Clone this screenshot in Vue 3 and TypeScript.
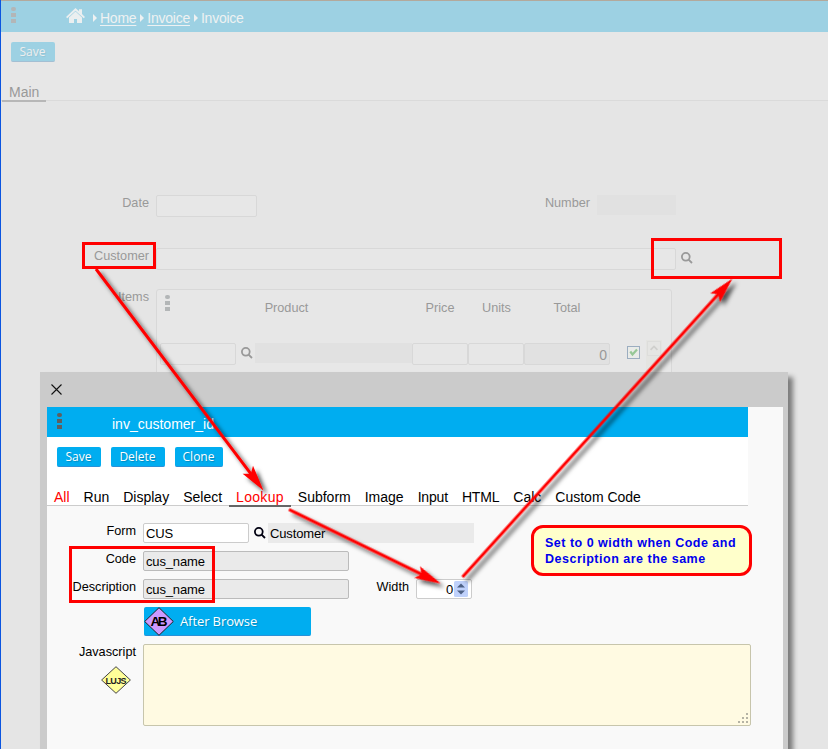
<script setup lang="ts">
interface Tab { label: string; red?: boolean; active?: boolean }
interface Arrow { x: number; y: number; length: number; angle: number }

const tabs: Tab[] = [
  { label: 'All', red: true },
  { label: 'Run' },
  { label: 'Display' },
  { label: 'Select' },
  { label: 'Lookup', red: true, active: true },
  { label: 'Subform' },
  { label: 'Image' },
  { label: 'Input' },
  { label: 'HTML' },
  { label: 'Calc' },
  { label: 'Custom Code' },
]
const actions: string[] = ['Save', 'Delete', 'Clone']

function arrow(x1: number, y1: number, x2: number, y2: number): Arrow {
  return {
    x: x2,
    y: y2,
    length: Math.hypot(x2 - x1, y2 - y1),
    angle: (Math.atan2(y2 - y1, x2 - x1) * 180) / Math.PI,
  }
}
const arrows: Arrow[] = [
  arrow(96, 269, 263.5, 490.5),
  arrow(289, 509.5, 440.5, 583.5),
  arrow(462.5, 577, 732.5, 278.5),
]
</script>

<template>
  <div class="screen">
    <header class="crumbs">
      <span class="dots"><i></i><i></i><i></i></span>
      <svg class="home" width="19" height="16" viewBox="0 0 19 16">
        <path d="M9.500 0 13 3.200V1.200h3v4.800l3 2.900-1.300 1.400L9.500 2.800 1.300 10.300 0 8.900z" fill="#ebeff0" />
        <path d="M9.500 3.600 16 9.600V15h-5v-4H8v4H3V9.600z" fill="#ebeff0" />
      </svg>
      <nav>
        <b class="tri"></b><a>Home</a><b class="tri"></b><a>Invoice</a><b class="tri"></b><span>Invoice</span>
      </nav>
    </header>
    <div class="toolbar"><button class="btn faded">Save</button></div>
    <div class="maintabs"><span>Main</span></div>

    <main class="invoice">
      <div class="row date">
        <label>Date</label><div class="box w101"></div>
        <label class="number">Number</label><div class="fill w79"></div>
      </div>
      <div class="row customer">
        <label>Customer</label><div class="box w520"></div>
        <svg class="mag" width="12" height="12" viewBox="0 0 12 12"><circle cx="4.800" cy="4.800" r="3.900" /><path d="M7.600 7.600 11 11" /></svg>
      </div>
      <div class="row items">
        <label>Items</label>
        <section class="sub">
          <div class="heads">
            <span class="dots"><i></i><i></i><i></i></span>
            <span>Product</span><span>Price</span><span>Units</span><span>Total</span>
          </div>
          <div class="cells">
            <div class="box"></div>
            <svg class="mag" width="12" height="12" viewBox="0 0 12 12"><circle cx="4.800" cy="4.800" r="3.900" /><path d="M7.600 7.600 11 11" /></svg>
            <div class="fill"></div><div class="box"></div><div class="box"></div><div class="box total">0</div>
            <svg class="check" width="13" height="13" viewBox="0 0 13 13"><rect x=".5" y=".5" width="12" height="12" fill="#e9ebe8" stroke="#9badc0" /><path d="M3.300 5.500 5.500 8.500 10 3.500" fill="none" stroke="#96c796" stroke-width="2.200" /></svg>
            <div class="scroll"><svg width="14" height="15" viewBox="0 0 14 15"><path d="M3 9 7 5 11 9" fill="none" stroke="#cfcfcc" stroke-width="2" /></svg></div>
          </div>
        </section>
      </div>
    </main>

    <section class="dialog">
      <div class="close"><svg width="11" height="11" viewBox="0 0 11 11"><path d="M.5.5 10.500 10.500M10.500.5.5 10.500" stroke="#111" stroke-width="1.100" /></svg></div>
      <div class="content">
        <div class="title"><span class="dots"><i></i><i></i><i></i></span><span class="name">inv_customer_id</span></div>
        <div class="upper">
          <div class="actions"><button v-for="a in actions" :key="a" class="btn">{{ a }}</button></div>
          <div class="tabs"><span v-for="t in tabs" :key="t.label" :class="{ red: t.red, active: t.active }">{{ t.label }}</span></div>
        </div>
        <div class="form">
          <div class="line">
            <label>Form</label><div class="field white w106">CUS</div>
            <svg class="mag dark" width="12" height="12" viewBox="0 0 12 12"><circle cx="4.800" cy="4.800" r="3.900" /><path d="M7.600 7.600 11 11" /></svg>
            <div class="readonly">Customer</div>
          </div>
          <div class="line"><label>Code</label><div class="field w206">cus_name</div></div>
          <div class="line">
            <label>Description</label><div class="field w206">cus_name</div>
            <label class="width">Width</label>
            <div class="field white spin"><span>0</span>
              <svg width="14" height="16" viewBox="0 0 14 16"><rect width="14" height="16" rx="1.500" fill="#bfd1fb" /><path d="M3 6.500 7 2.500 11 6.500zM3 9.500 7 13.500 11 9.500z" fill="#4d6185" /></svg>
            </div>
          </div>
          <div class="browse">
            <svg width="30" height="29" viewBox="0 0 30 29"><path d="M15 .7 29.300 14.500 15 28.300 .7 14.500z" fill="#cc99ff" stroke="#222" /><text x="15" y="19" text-anchor="middle" textLength="17" class="ab">AB</text></svg>
            <span>After Browse</span>
          </div>
          <div class="script">
            <div class="side"><label>Javascript</label>
              <svg width="30" height="28" viewBox="0 0 30 28"><path d="M15 .7 29.400 14 15 27.300 .6 14z" fill="#ffff99" stroke="#444" /><text x="15" y="17.500" text-anchor="middle" textLength="21" class="lujs">LUJS</text></svg>
            </div>
            <div class="area"><svg width="10" height="10" viewBox="0 0 10 10" fill="#b5b3a5"><path d="M8 0h2v2H8zM4 4h2v2H4zM8 4h2v2H8zM0 8h2v2H0zM4 8h2v2H4zM8 8h2v2H8z" /></svg></div>
          </div>
        </div>
      </div>
    </section>

    <aside class="callout">Set to 0 width when Code and<br />Description are the same</aside>

    <svg class="notes" width="828" height="749" viewBox="0 0 828 749">
      <defs><filter id="shade" filterUnits="userSpaceOnUse" x="0" y="0" width="828" height="749"><feDropShadow dx="4" dy="4" stdDeviation="2.200" flood-color="#000" flood-opacity=".65" /></filter></defs>
      <g fill="none" stroke="#f00" stroke-width="3">
        <rect x="83.500" y="243.500" width="71" height="24" />
        <rect x="652.500" y="239.500" width="128" height="38" />
        <rect x="70.500" y="547.500" width="143" height="54" />
      </g>
      <g filter="url(#shade)" fill="#f00">
        <g v-for="(a, i) in arrows" :key="i" :transform="`translate(${a.x} ${a.y}) rotate(${a.angle})`">
          <path :d="`M${-a.length} -1.500H-19V1.500H${-a.length}z`" />
          <path d="M0 0-26-6.500-21 0-26 6.500z" />
        </g>
      </g>
    </svg>
  </div>
</template>

<style>
body { margin: 0; overflow: hidden; }
</style>

<style scoped>
* { box-sizing: border-box; }
.screen { position: relative; width: 828px; height: 749px; overflow: hidden; background: #e5e5e5; border-left: 1px solid #0b55e0; font: 13px/16px "Liberation Sans", sans-serif; color: #999; }
.crumbs { height: 32px; background: #9dd1e3; border-top: 1px solid #b3a99c; display: flex; align-items: flex-start; }
.dots { display: flex; flex-direction: column; gap: 2px; width: 5px; }
.dots i { height: 4px; background: #b3b6b7; }
.dots i:first-child { border-radius: 2px; }
.crumbs .dots { margin: 6px 0 0 10px; }
.home { margin: 7px 0 0 50px; }
nav { display: flex; align-items: center; margin: 9px 0 0 8px; font-size: 14px; letter-spacing: -.25px; color: #eef1f2; }
nav a { text-decoration: underline; text-underline-offset: 2px; }
.tri { border: 4px solid transparent; border-left-color: #eef1f2; border-right: 0; margin: 0 3px 0 4px; }
.tri:first-child { margin-left: 0; }
.toolbar { padding: 10px 0 0 10px; height: 51px; background: #e7e7e7; }
.btn { font: 400 12px/18px "Open Sans", sans-serif; height: 20px; border: 0; border-bottom: 1px solid #2991d8; border-radius: 2px; background: #00adf0; color: #fff; padding: 0 8px 0 7px; text-shadow: 1px 1px 1px #0003; display: block; }
.btn.faded { background: #9dd1e3; color: #eee; border-color: #a3bfd3; width: 44px; text-shadow: 1px 1px 1px #0001; }
.maintabs { height: 18px; background: #e7e7e7; border-bottom: 1px solid #dadada; display: flex; font-size: 14px; }
.maintabs span { height: 19px; margin-left: 1px; width: 44px; padding-left: 7px; line-height: 18px; border-bottom: 2px solid #b7b7b7; }
.invoice { padding-top: 94px; font-size: 12.700px; }
.row { display: flex; }
.row > label { width: 148px; text-align: right; flex: none; }
.box { border: 1px solid #d8d8d8; border-radius: 2px; height: 22px; background: #e7e7e7; }
.fill { background: #e1e1e1; height: 20px; }
.row > .box, .sub { margin-left: 7px; }
.date { height: 53px; }
.w101 { width: 101px; } .w79 { width: 79px; margin-left: 7px; } .w520 { width: 520px; }
.row > .number { width: 333px; }
.customer { height: 41px; }
.mag { fill: none; stroke: #999; stroke-width: 1.800; margin: 4px 0 0 5px; flex: none; }
.sub { width: 516px; height: 110px; border: 1px solid #d8d8d8; border-radius: 3px; background: #e7e7e7; padding: 5px 0 0 3px; }
.heads { display: grid; grid-template-columns: 5px 233px 74px 39px 102px; height: 48px; padding-left: 5px; }
.heads > span:not(.dots) { text-align: center; padding-top: 5px; }
.cells { display: grid; grid-template-columns: 76px 19px 157px 56px 56px 86px 17px 13px 6px 16px; }
.total { grid-column: 6; background: #e1e1e1; text-align: right; padding: 3px 2px 0; font-size: 14px; }
.check { grid-column: 8; margin-top: 3px; }
.scroll { grid-column: 10; margin-top: -3px; height: 35px; background: #e4e4e1; padding: 1px; }
.scroll svg { background: #e5e5e3; border: 1px solid #dddddb; display: block; }
.dialog { position: absolute; left: 39px; top: 372px; width: 748px; height: 390px; background: #cbcbcb; box-shadow: 5px 5px 5px #0007; padding: 0 5px 0 7px; color: #000; }
.close { height: 35px; padding: 12px 0 0 4px; }
.close svg { display: block; }
.content { height: 355px; background: #f9f9f9; }
.title { width: 701px; height: 30px; background: #00adf0; display: flex; padding: 6px 0 0 10px; color: #fff; }
.title .dots i { background: #5f5f5f; }
.name { margin: 3px 0 0 50px; font-size: 14px; letter-spacing: 0; }
.upper { width: 701px; height: 69px; background: #fff; border-bottom: 1px solid #ccc; padding-top: 10px; }
.actions { display: flex; gap: 10px; padding-left: 10px; }
.actions .btn { width: 44px; }
.actions .btn:nth-child(2) { width: 54px; }
.actions .btn:nth-child(3) { width: 48px; }
.tabs { display: flex; font-size: 14px; margin-top: 20px; }
.tabs span { padding: 0 7px; height: 20px; line-height: 20px; white-space: nowrap; }
.tabs .red { color: #f00; }
.tabs .active { border-bottom: 2px solid #666; letter-spacing: .3px; }
.tabs span:nth-child(8), .tabs span:nth-child(9) { letter-spacing: -.18px; }
.form { padding-top: 17px; }
.line { display: flex; height: 28px; }
.line label, .side label { width: 89px; text-align: right; flex: none; font-size: 12.700px; line-height: 17px; }
.field { margin-left: 7px; height: 20px; background: #eaeaea; border: 1px solid #bbb; border-radius: 2px; padding-left: 2px; line-height: 20px; font-size: 13px; letter-spacing: -.15px; }
.white { background: #fff; border-color: #ccc; }
.w106 { width: 106px; } .w206 { width: 206px; }
.mag.dark { stroke: #001; stroke-width: 1.800; margin: 4px 0 0 5px; }
.readonly { width: 206px; height: 20px; background: #eaeaea; line-height: 21px; margin-left: 2px; padding-left: 2px; letter-spacing: -.15px; }
.line .width { width: 60px; }
.spin { width: 56px; display: flex; justify-content: flex-end; gap: 1px; padding: 1px 3px 0 0; line-height: 18px; }
.browse { width: 167px; height: 29px; margin-left: 97px; background: #00adf0; border-bottom: 1px solid #2991d8; border-radius: 2px; color: #fff; display: flex; align-items: center; font: 400 13px/28px "Open Sans", sans-serif; letter-spacing: -.1px; text-shadow: 1px 1px 1px #0003; }
.browse svg { flex: none; margin-right: 6px; text-shadow: none; }
.ab { font: bold 13.500px "Liberation Sans", sans-serif; fill: #000; }
.lujs { font: bold 9px "Liberation Sans", sans-serif; fill: #222; }
.script { display: flex; margin-top: 8px; }
.side { width: 89px; }
.side label { display: block; }
.side svg { display: block; margin: 5px 0 0 54px; }
.area { width: 608px; height: 82px; margin-left: 7px; background: #fffae2; border: 1px solid #c7c5ac; border-radius: 2px; display: flex; align-items: flex-end; justify-content: flex-end; padding: 2px; }
.callout { position: absolute; left: 530px; top: 525px; width: 221px; height: 51px; border: 3px solid #f00; border-radius: 12px; background: #ffffcb; color: #00e; font-size: 12.500px; font-weight: bold; letter-spacing: .5px; padding: 7px 0 0 11px; white-space: nowrap; }
.notes { position: absolute; left: -1px; top: 0; }
</style>
